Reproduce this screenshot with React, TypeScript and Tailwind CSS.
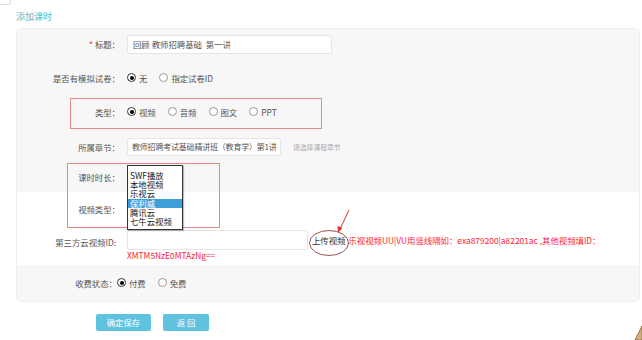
import React from "react";

function Radio({ checked }: { checked?: boolean }) {
  return (
    <span
      className={
        "w-[9px] h-[9px] rounded-full border bg-white flex items-center justify-center shrink-0 " +
        (checked ? "border-[#333]" : "border-[#999]")
      }
    >
      {checked && <span className="w-[4px] h-[4px] rounded-full bg-black" />}
    </span>
  );
}

function RadioItem({ checked, label }: { checked?: boolean; label: string }) {
  return (
    <span className="flex items-center gap-[3px]">
      <Radio checked={checked} />
      <span>{label}</span>
    </span>
  );
}

function Label({ children, w = "w-[103px]" }: { children: React.ReactNode; w?: string }) {
  return <div className={w + " shrink-0 text-right"}>{children}</div>;
}

export default function App() {
  return (
    <div className="relative w-[642px] h-[340px] overflow-hidden bg-white font-['Noto_Sans_CJK_SC',sans-serif] text-[8.4px] text-[#555]">
      <div className="w-[11px] h-[5px] border-r border-b border-[#ddd] rounded-br-[2px]" />
      <div className="pl-[16px] h-[23px] flex items-center text-[9px] text-[#5bb8c2]">添加课时</div>

      <div className="ml-[16px] w-[624px] border border-[#eee] rounded-[5px] overflow-hidden">
        {/* gray top */}
        <div className="bg-[#f7f7f7]">
          <div className="h-[31px] flex items-center">
            <Label>
              <span className="text-[#e33]">* </span>标题：
            </Label>
            <div className="ml-[7px] w-[205px] h-[19px] bg-white border border-[#e5e5e5] rounded-[2px] flex items-center pl-[5px] text-[#555] whitespace-pre">
              回顾 教师招聘基础  第一讲
            </div>
          </div>
          <div className="h-[36px] flex items-center">
            <Label>是否有模拟试卷：</Label>
            <div className="ml-[7px] flex items-center gap-[12px]">
              <RadioItem checked label="无" />
              <RadioItem label="指定试卷ID" />
            </div>
          </div>
          <div className="h-[32px] flex items-center">
            <Label>类型：</Label>
            <div className="ml-[7px] flex items-center gap-[12px]">
              <RadioItem checked label="视频" />
              <RadioItem label="音频" />
              <RadioItem label="图文" />
              <RadioItem label="PPT" />
            </div>
          </div>
          <div className="h-[38px] flex items-center">
            <Label>所属章节：</Label>
            <div className="ml-[7px] w-[154px] h-[18px] bg-white border border-[#e5e5e5] rounded-[2px] flex items-center pl-[4px] overflow-hidden whitespace-nowrap text-[8px] tracking-[-0.2px] text-[#555]">
              教师招聘考试基础精讲班（教育学）第1讲
            </div>
            <span className="ml-[12px] text-[6.8px] text-[#aaa]">请选择课程章节</span>
          </div>
          <div className="h-[22px] flex items-center">
            <Label>课时时长：</Label>
          </div>
          <div className="h-[4px]" />
        </div>

        {/* white middle */}
        <div className="bg-white pt-[6px] pb-[5px]">
          <div className="h-[22px] flex items-center">
            <Label>视频类型：</Label>
          </div>
          <div className="mt-[10px] flex">
            <Label w="w-[99px]">
              <span className="block pt-[7px] leading-[10px]">第三方云视频ID:</span>
            </Label>
            <div className="ml-[11px]">
              <div className="flex items-center h-[20px] whitespace-nowrap">
                <div className="w-[181px] h-[20px] bg-white border border-[#e5e5e5] rounded-[2px]" />
                <span className="ml-[4px] text-[#333]">上传视频</span>
                <span className="ml-[3px] text-[#f23]">乐视视频UU|VU用竖线隔如：exa879200|a82201ac ,其他视频填ID：</span>
              </div>
              <div className="h-[10px] leading-[10px] text-[#f23]">XMTM5NzE0MTAzNg==</div>
            </div>
          </div>
        </div>

        {/* gray bottom */}
        <div className="bg-[#f7f7f7] h-[36px] flex items-center">
          <Label w="w-[100px]">收费状态：</Label>
          <div className="flex items-center gap-[12px]">
            <RadioItem checked label="付费" />
            <RadioItem label="免费" />
          </div>
        </div>
      </div>

      <div className="mt-[12px] ml-[96px] flex gap-[12px]">
        <div className="w-[55px] h-[17px] rounded-[2px] bg-[#5fc2df] text-white text-[8.4px] flex items-center justify-center">
          确定保存
        </div>
        <div className="w-[46px] h-[17px] rounded-[2px] bg-[#5fc2df] text-white text-[8.4px] flex items-center justify-center whitespace-pre">
          返 回
        </div>
      </div>

      {/* annotations & overlays */}
      <div className="absolute left-[70px] top-[98px] w-[252px] h-[31px] border border-[#e58a8a]" />
      <div className="absolute left-[67px] top-[163px] w-[153px] h-[65px] border border-[#e58a8a]" />

      <div className="absolute left-[127px] top-[165px] w-[56px] h-[65px] bg-white border border-[#333] shadow-[1px_1px_1px_rgba(0,0,0,0.25)] pt-[5px] text-[8.4px] leading-[9.2px] text-[#222]">
        <div className="pl-[2px]">SWF播放</div>
        <div className="pl-[2px]">本地视频</div>
        <div className="pl-[2px]">乐视云</div>
        <div className="pl-[2px] bg-[#3e9fdb] text-white">保利威</div>
        <div className="pl-[2px]">腾讯云</div>
        <div className="pl-[2px]">七牛云视频</div>
      </div>

      <svg className="absolute left-[308px] top-[229px]" width="42" height="28" viewBox="0 0 42 28">
        <ellipse cx="21" cy="14" rx="19.5" ry="12.5" fill="none" stroke="#8e3b3b" strokeWidth="0.9" />
      </svg>

      <svg className="absolute left-[333px] top-[207px]" width="20" height="30" viewBox="0 0 20 30">
        <line x1="16" y1="3" x2="7.5" y2="21" stroke="#e03030" strokeWidth="1" />
        <polygon points="5,26 4.5,19 9.5,21" fill="#e03030" />
      </svg>

      <svg className="absolute left-[632px] top-[325px]" width="10" height="15" viewBox="0 0 10 15">
        <polygon points="10,1 3,15 10,15" fill="#d8b27c" stroke="#7a5a35" strokeWidth="0.8" />
      </svg>
    </div>
  );
}
